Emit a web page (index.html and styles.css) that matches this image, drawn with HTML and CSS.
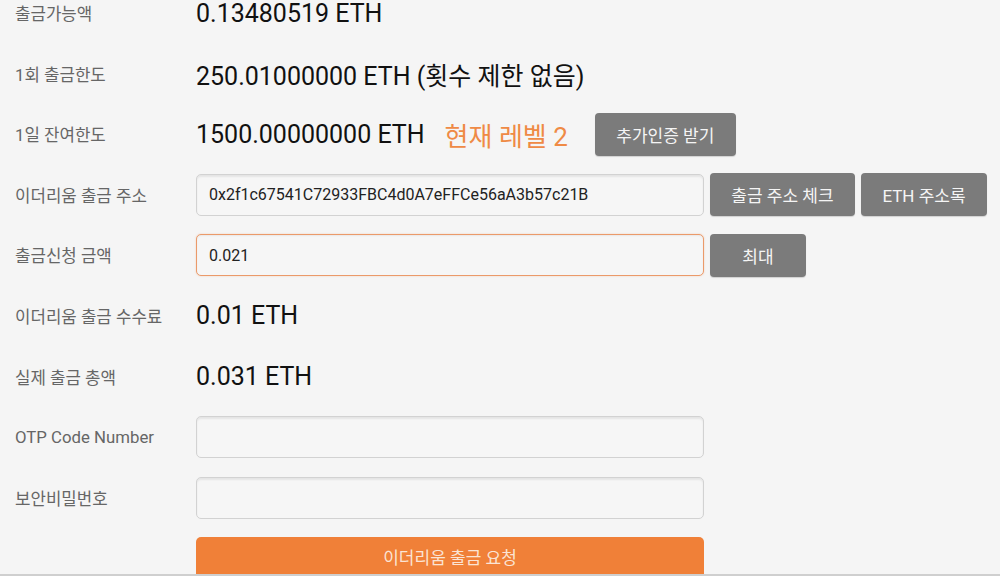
FILE: index.html
```
<!DOCTYPE html>
<html lang="ko">
<head>
<meta charset="utf-8">
<title>이더리움 출금</title>
<link rel="stylesheet" href="styles.css">
</head>
<body>
<div class="page">
  <div class="form">
    <div class="label">출금가능액</div>
    <div class="value"><span class="amount">0.13480519 ETH</span></div>

    <div class="label">1회 출금한도</div>
    <div class="value"><span class="amount">250.01000000 ETH (횟수 제한 없음)</span></div>

    <div class="label">1일 잔여한도</div>
    <div class="value">
      <span class="amount">1500.00000000 ETH</span>
      <span class="level">현재 레벨 2</span>
      <button class="btn btn-verify">추가인증 받기</button>
    </div>

    <div class="label">이더리움 출금 주소</div>
    <div class="value">
      <input class="field" type="text" value="0x2f1c67541C72933FBC4d0A7eFFCe56aA3b57c21B">
      <button class="btn btn-check">출금 주소 체크</button>
      <button class="btn btn-book">ETH 주소록</button>
    </div>

    <div class="label">출금신청 금액</div>
    <div class="value">
      <input class="field field-focus" type="text" value="0.021">
      <button class="btn btn-max">최대</button>
    </div>

    <div class="label">이더리움 출금 수수료</div>
    <div class="value"><span class="amount">0.01 ETH</span></div>

    <div class="label">실제 출금 총액</div>
    <div class="value"><span class="amount">0.031 ETH</span></div>

    <div class="label">OTP Code Number</div>
    <div class="value"><input class="field" type="text" value=""></div>

    <div class="label">보안비밀번호</div>
    <div class="value"><input class="field" type="password" value=""></div>

    <div class="label"></div>
    <div class="value"><button class="submit">이더리움 출금 요청</button></div>
  </div>
</div>
</body>
</html>
```

FILE: styles.css
```
html, body {
  margin: 0;
  padding: 0;
  background: #f5f5f5;
}

body {
  font-family: Roboto, "Noto Sans CJK KR", sans-serif;
  color: #111;
}

.page {
  position: relative;
  height: 576px;
  overflow: hidden;
  background: #f5f5f5;
}

.page::after {
  content: "";
  position: absolute;
  left: 0;
  right: 0;
  bottom: 0;
  height: 2px;
  background: #cfcfcf;
}

.form {
  display: grid;
  grid-template-columns: 181px auto;
  grid-auto-rows: 42px;
  row-gap: 18.6px;
  padding-left: 15px;
  margin-top: -8px;
}

.label {
  display: flex;
  align-items: center;
  font-size: 16.8px;
  color: #666;
  white-space: nowrap;
}

.value {
  display: flex;
  align-items: center;
  gap: 6px;
}

.amount {
  font-size: 25px;
  color: #111;
  white-space: nowrap;
}

.level {
  font-size: 26px;
  color: #ef8a45;
  margin-left: 14px;
  white-space: nowrap;
}

.btn {
  height: 43px;
  border: none;
  border-radius: 4px;
  background: #7b7b7b;
  color: #f5f5f5;
  font-family: Roboto, "Noto Sans CJK KR", sans-serif;
  font-size: 17px;
  padding: 0;
  box-shadow: 0 1px 1px rgba(0,0,0,0.15);
}

.btn-verify {
  width: 141px;
  margin-left: 21px;
}

.btn-check { width: 145px; }
.btn-book { width: 126px; }
.btn-max { width: 96px; }

.field {
  box-sizing: border-box;
  width: 508px;
  height: 42px;
  border: 1px solid #d2d2d2;
  border-radius: 5px;
  background: #f6f6f6;
  box-shadow: inset 0 2px 2px rgba(0,0,0,0.07);
  padding: 0 12px;
  font-family: Roboto, "Noto Sans CJK KR", sans-serif;
  font-size: 16px;
  color: #222;
  outline: none;
}

.field-focus {
  border-color: #eb9a6a;
  box-shadow: inset 0 1px 2px rgba(0,0,0,0.06), 0 0 2px rgba(235,140,80,0.35);
}

.submit {
  width: 508px;
  height: 44px;
  border: none;
  border-radius: 5px 5px 0 0;
  background: #f08038;
  color: #fbe4d4;
  font-family: Roboto, "Noto Sans CJK KR", sans-serif;
  font-size: 17px;
  padding: 0 0 6px;
  align-self: flex-start;
}
```
